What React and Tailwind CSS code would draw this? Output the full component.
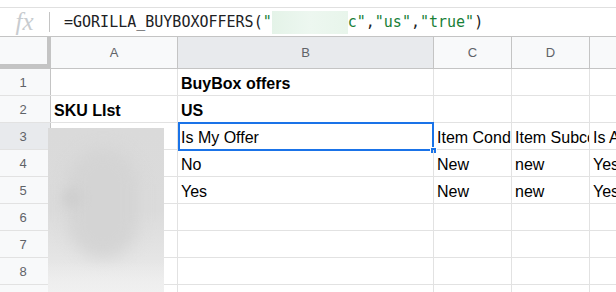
const cols = [
  { key: 'A', w: 'w-[127px]' },
  { key: 'B', w: 'w-[256px]' },
  { key: 'C', w: 'w-[78px]' },
  { key: 'D', w: 'w-[78px]' },
  { key: 'E', w: 'w-[100px]' },
];

const rows = [
  { n: 1, bold: true, cells: ['', 'BuyBox offers', '', '', ''] },
  { n: 2, bold: true, cells: ['SKU LIst', 'US', '', '', ''] },
  { n: 3, cells: ['', 'Is My Offer', 'Item Condition', 'Item Subcondition', 'Is Amazon Fulfilled'] },
  { n: 4, cells: ['', 'No', 'New', 'new', 'Yes'] },
  { n: 5, cells: ['', 'Yes', 'New', 'new', 'Yes'] },
  { n: 6, cells: ['', '', '', '', ''] },
  { n: 7, cells: ['', '', '', '', ''] },
  { n: 8, cells: ['', '', '', '', ''] },
  { n: 9, cells: ['', '', '', '', ''] },
];

const FormulaBar = () => (
  <div>
    <div className="h-[7px] bg-white" />
    <div className="h-[30px] flex items-center border-t border-[#e0e0e0] border-b border-b-[#c4c4c4] bg-white">
      <div className="w-[50px] h-[20px] flex items-center justify-center border-r border-[#c4c4c4]">
        <span className="text-[25px] italic text-[#c8ccd0] leading-none -mt-[2px]" style={{ fontFamily: '"Liberation Serif", serif' }}>
          fx
        </span>
      </div>
      <div
        className="pl-[14px] flex items-center text-[15px] text-[#202124] whitespace-nowrap"
        style={{ fontFamily: '"DejaVu Sans Mono", monospace' }}
      >
        <span>=GORILLA_BUYBOXOFFERS(</span>
        <span className="text-[#188038]">"</span>
        <span className="inline-block w-[76px] h-[23px] bg-gradient-to-r from-[#e4f3e8] via-[#edf7f0] to-[#e8f5eb]" />
        <span className="text-[#188038]">c"</span>
        <span>,</span>
        <span className="text-[#188038]">"us"</span>
        <span>,</span>
        <span className="text-[#188038]">"true"</span>
        <span>)</span>
      </div>
    </div>
  </div>
);

const HeaderRow = () => (
  <div className="flex h-[32px] border-b border-[#c4c4c4] bg-[#f8f9fa]">
    <div className="w-[51px] shrink-0 h-[31px] flex">
      <div className="w-[47px] h-[27px] border-r-4 border-b-4 border-[#c4c4c4] box-content" />
    </div>
    {cols.map((c) => (
      <div
        key={c.key}
        className={`${c.w} shrink-0 flex items-center justify-center border-r border-[#c4c4c4] text-[13px] text-[#5f6368] ${
          c.key === 'B' ? 'bg-[#e8eaed]' : ''
        }`}
      >
        {c.key}
      </div>
    ))}
  </div>
);

const App = () => {
  return (
    <div
      className="relative w-[616px] h-[292px] overflow-hidden bg-white"
      style={{ fontFamily: '"Liberation Sans", Arial, sans-serif' }}
    >
      <FormulaBar />
      <HeaderRow />
      {rows.map((r) => (
        <div key={r.n} className="flex h-[27px] border-b border-[#e2e2e2]">
          <div
            className={`w-[51px] shrink-0 pr-[4px] pt-[2px] flex items-center justify-center border-r border-[#c4c4c4] text-[13px] text-[#5f6368] ${
              r.n === 3 ? 'bg-[#e8eaed]' : 'bg-[#f8f9fa]'
            }`}
          >
            {r.n}
          </div>
          {cols.map((c, i) => (
            <div
              key={c.key}
              className={`${c.w} shrink-0 relative border-r border-[#e2e2e2] pl-[3px] pt-[5px] text-[16px] leading-[20px] text-black whitespace-nowrap ${
                r.bold ? 'font-bold' : ''
              }`}
            >
              <div className="overflow-hidden">{r.cells[i]}</div>
              {r.n === 3 && c.key === 'B' && (
                <>
                  <div className="absolute -top-[1px] left-0 -right-[1px] -bottom-[2px] border-2 border-[#1a73e8]" />
                  <div className="absolute -right-[4px] -bottom-[5px] w-[7px] h-[7px] bg-[#1a73e8] border border-white" />
                </>
              )}
            </div>
          ))}
        </div>
      ))}

      {/* redacted SKU column */}
      <div className="absolute left-[48px] top-[128px] w-[116px] h-[164px] overflow-hidden">
        <div className="absolute inset-0 bg-gradient-to-b from-[#dadada] via-[#dbdbdb] to-[#ececec]" />
        <div className="absolute left-[20px] top-[20px] w-[70px] h-[110px] bg-[#d4d4d4] blur-[8px] rounded-full" />
        <div className="absolute left-[14px] top-[60px] w-[20px] h-[20px] bg-[#cfcfcf] blur-[5px] rounded-full" />
        <div className="absolute left-0 right-0 bottom-0 h-[30px] bg-gradient-to-b from-transparent to-[#f0f0f0]" />
      </div>
    </div>
  );
};

export default App;
